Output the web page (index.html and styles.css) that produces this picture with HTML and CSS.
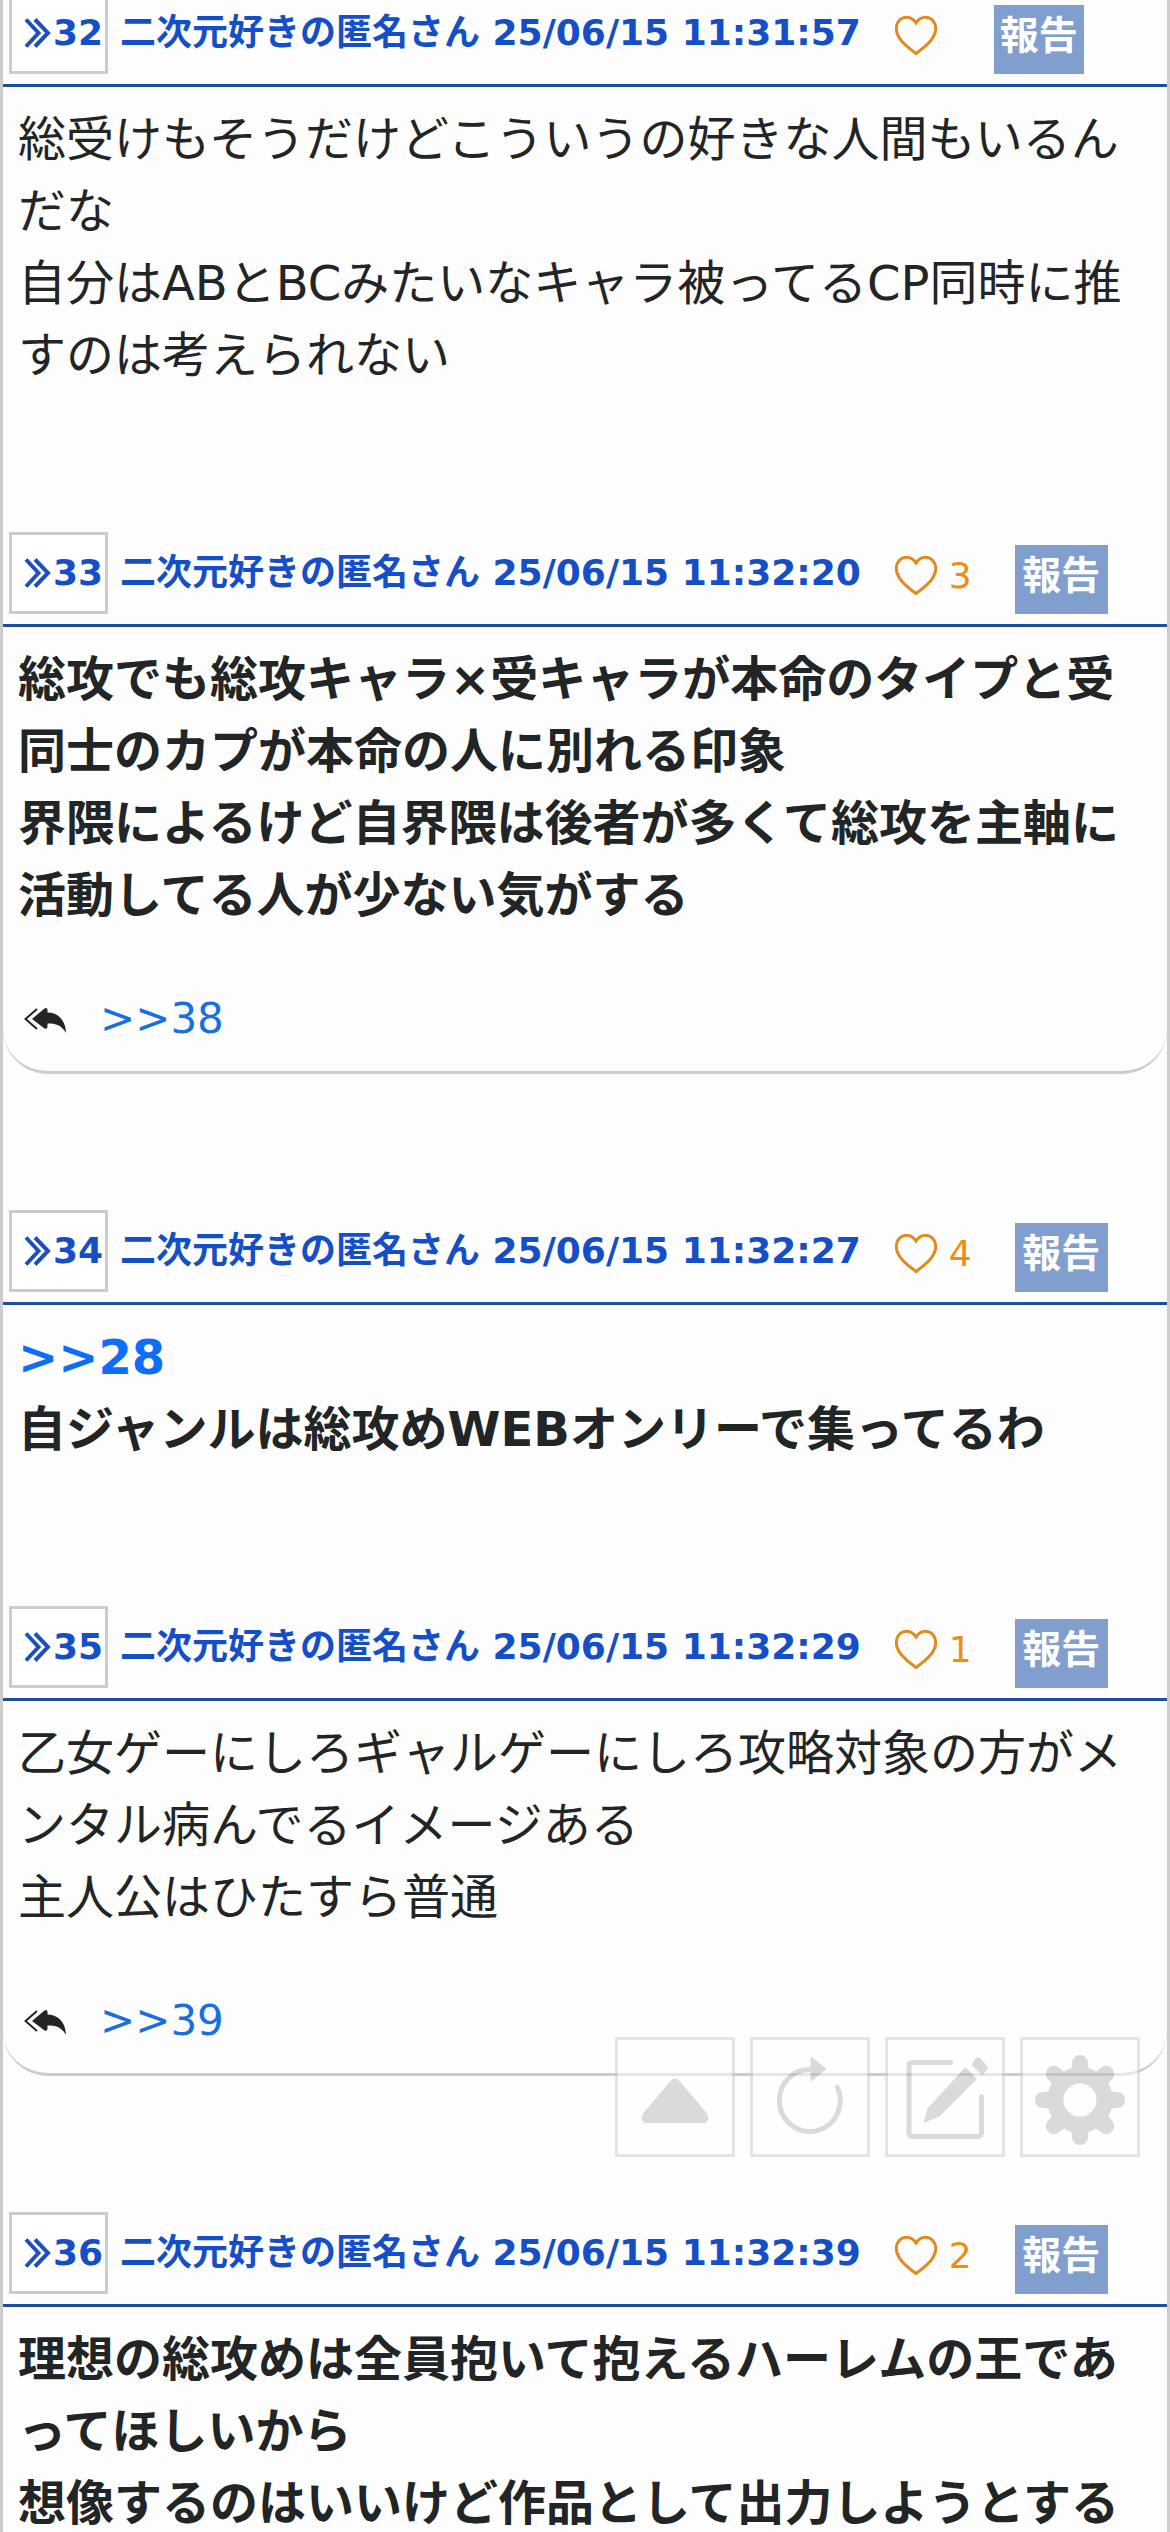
FILE: index.html
```html
<!DOCTYPE html>
<html lang="ja">
<head>
<meta charset="utf-8">
<meta name="viewport" content="width=device-width, initial-scale=1">
<title>二次元好きの匿名さん</title>
<link rel="stylesheet" href="styles.css">
</head>
<body>
<svg class="sprite" aria-hidden="true">
  <symbol id="chevrons" viewBox="0 0 27 30"><path d="M2 1.500 14.500 15 2 28.500M11 1.500 24 15 11 28.500"/></symbol>
  <symbol id="heart" viewBox="0 0 42 39"><path d="M21 7C18.500 3.200 15 1.300 11.500 1.300C5.500 1.300 1.300 6 1.300 12.500C1.300 22 10 29.500 21 37.500C32 29.500 40.700 22 40.700 12.500C40.700 6 36.500 1.300 30.500 1.300C27 1.300 23.500 3.200 21 7Z"/></symbol>
  <symbol id="replies" viewBox="0 0 42 27"><path class="replies-line" d="M13 2 1.500 12 13 22"/><path d="M8 12 20.500 1.500Q23.500 0 23.500 3V5.500C33 5.500 41.500 12 42 26C37.500 18 32 16.500 23.500 16.500V19.500Q23.500 22.500 20.500 21.500Z"/></symbol>
</svg>
<main class="thread">
  <article class="post">
    <header class="post-head">
      <a class="number" href="#p32"><svg class="chevrons"><use href="#chevrons"/></svg>32</a>
      <a class="byline" href="#p32">二次元好きの匿名さん 25/06/15 11:31:57</a>
      <button class="vote vote-empty" type="button" aria-label="いいね"><svg class="heart"><use href="#heart"/></svg></button>
      <button class="report" type="button">報告</button>
    </header>
    <p class="text">総受けもそうだけどこういうの好きな人間もいるんだな<br>自分はABとBCみたいなキャラ被ってるCP同時に推すのは考えられない</p>
  </article>
  <article class="post has-replies">
    <header class="post-head">
      <a class="number" href="#p33"><svg class="chevrons"><use href="#chevrons"/></svg>33</a>
      <a class="byline" href="#p33">二次元好きの匿名さん 25/06/15 11:32:20</a>
      <button class="vote" type="button" aria-label="いいね 3"><svg class="heart"><use href="#heart"/></svg>3</button>
      <button class="report" type="button">報告</button>
    </header>
    <p class="text popular">総攻でも総攻キャラ×受キャラが本命のタイプと受同士のカプが本命の人に別れる印象<br>界隈によるけど自界隈は後者が多くて総攻を主軸に活動してる人が少ない気がする</p>
    <footer class="replies"><svg class="replies-icon"><use href="#replies"/></svg><a class="reply-link" href="#p38">&gt;&gt;38</a></footer>
  </article>
  <article class="post">
    <header class="post-head">
      <a class="number" href="#p34"><svg class="chevrons"><use href="#chevrons"/></svg>34</a>
      <a class="byline" href="#p34">二次元好きの匿名さん 25/06/15 11:32:27</a>
      <button class="vote" type="button" aria-label="いいね 4"><svg class="heart"><use href="#heart"/></svg>4</button>
      <button class="report" type="button">報告</button>
    </header>
    <p class="text popular"><a class="reply-link" href="#p28">&gt;&gt;28</a><br>自ジャンルは総攻めWEBオンリーで集ってるわ</p>
  </article>
  <article class="post has-replies">
    <header class="post-head">
      <a class="number" href="#p35"><svg class="chevrons"><use href="#chevrons"/></svg>35</a>
      <a class="byline" href="#p35">二次元好きの匿名さん 25/06/15 11:32:29</a>
      <button class="vote" type="button" aria-label="いいね 1"><svg class="heart"><use href="#heart"/></svg>1</button>
      <button class="report" type="button">報告</button>
    </header>
    <p class="text">乙女ゲーにしろギャルゲーにしろ攻略対象の方がメンタル病んでるイメージある<br>主人公はひたすら普通</p>
    <footer class="replies"><svg class="replies-icon"><use href="#replies"/></svg><a class="reply-link" href="#p39">&gt;&gt;39</a></footer>
  </article>
  <article class="post">
    <header class="post-head">
      <a class="number" href="#p36"><svg class="chevrons"><use href="#chevrons"/></svg>36</a>
      <a class="byline" href="#p36">二次元好きの匿名さん 25/06/15 11:32:39</a>
      <button class="vote" type="button" aria-label="いいね 2"><svg class="heart"><use href="#heart"/></svg>2</button>
      <button class="report" type="button">報告</button>
    </header>
    <p class="text popular">理想の総攻めは全員抱いて抱えるハーレムの王であってほしいから<br>想像するのはいいけど作品として出力しようとする</p>
  </article>
</main>
<nav class="tools" aria-label="ツール">
  <button class="tool" type="button" aria-label="上へ"><svg viewBox="0 0 120 120"><path d="M56 45Q60 40 64 45L91 77Q94 82 90 85H30Q26 82 29 77Z" stroke-width="2" stroke-linejoin="round" stroke="currentColor"/></svg></button>
  <button class="tool" type="button" aria-label="更新"><svg viewBox="0 0 120 120"><path class="stroke" d="M61 32.500A30.500 31 0 1 0 87.500 50.500"/><path d="M61 20 76 32 61 44Z" stroke="currentColor" stroke-linejoin="round"/></svg></button>
  <button class="tool" type="button" aria-label="書き込む"><svg viewBox="0 0 120 120"><path class="stroke" d="M65.500 25.500H27.500Q24 25.500 24 29V95.500Q24 99.500 27.500 99.500H92.500Q96.500 99.500 96.500 95.500V59.500"/><path d="M38.500 86 42.500 71.500 79 31.500Q80.500 30 82 31.500L91.700 42.300 54.500 79.500ZM86.500 28 90.500 21.500Q93 19 95.500 21.500L101.500 28Q104 30.500 101.500 33.500L97 38Z"/></svg></button>
  <button class="tool" type="button" aria-label="設定"><svg viewBox="0 0 120 120"><defs><path id="tooth" d="M47 32.500C51 33 52 31 52 26A8 8 0 0 1 68 26C68 31 69 33 73 32.500L68 46H52Z"/></defs><circle cx="60" cy="63" r="24.500" fill="none" stroke="currentColor" stroke-width="16"/><use href="#tooth"/><use href="#tooth" transform="rotate(45 60 63)"/><use href="#tooth" transform="rotate(90 60 63)"/><use href="#tooth" transform="rotate(135 60 63)"/><use href="#tooth" transform="rotate(180 60 63)"/><use href="#tooth" transform="rotate(225 60 63)"/><use href="#tooth" transform="rotate(270 60 63)"/><use href="#tooth" transform="rotate(315 60 63)"/></svg></button>
</nav>
</body>
</html>
```
FILE: styles.css
```css
* { box-sizing: border-box; }

body {
  margin: 0;
  height: 100vh;
  overflow: hidden;
  background: #fdfdfd;
  color: #222526;
  font-family: "DejaVu Sans", "Noto Sans CJK JP", sans-serif;
}

a { text-decoration: none; }

button {
  margin: 0;
  padding: 0;
  border: 0;
  background: none;
  font-family: inherit;
  cursor: pointer;
}

.sprite {
  position: absolute;
  width: 0;
  height: 0;
}

.thread {
  display: flex;
  flex-direction: column;
  min-height: 100vh;
  margin-top: -8px;
  border: solid #ccc;
  border-width: 0 3px;
}

.post { padding-bottom: 141px; }

.post-head {
  display: flex;
  align-items: center;
  padding: 0 0 10px 6px;
  border-bottom: 3px solid #1b4da3;
}

.number {
  display: flex;
  align-items: center;
  flex: none;
  width: 99px;
  height: 82px;
  padding-left: 12px;
  border: 3px solid #ccc;
  background: #fff;
  color: #144fc8;
  font-size: 36px;
  font-weight: 700;
  line-height: 54px;
}

.chevrons {
  flex: none;
  width: 27px;
  height: 30px;
  margin-right: 2px;
  fill: none;
  stroke: #1d50bd;
  stroke-width: 4;
}

.byline {
  margin: 0 34px 0 12px;
  color: #144fc8;
  font-size: 36px;
  font-weight: 700;
  line-height: 54px;
  white-space: nowrap;
}

.vote {
  display: flex;
  align-items: center;
  gap: 12px;
  margin-right: 43px;
  padding-top: 5px;
  color: #ed8e13;
  font-size: 36px;
  line-height: 54px;
}

.vote-empty { margin-right: 57px; }

.heart {
  width: 42px;
  height: 39px;
  fill: none;
  stroke: #e08a20;
  stroke-width: 3;
}

.report {
  align-self: flex-end;
  width: 93px;
  height: 69px;
  padding-bottom: 8px;
  background: #809fcf;
  color: #fff;
  font-size: 39px;
  font-weight: 700;
  line-height: 60px;
}

.vote-empty + .report { width: 90px; }

.text {
  margin: 0;
  padding: 16px 18px 0 15px;
  font-size: 48px;
  line-height: 72px;
}

.popular { font-weight: 700; }

.reply-link { color: #0d6efd; }

.has-replies {
  margin-bottom: 136px;
  padding-bottom: 21px;
  border-bottom: 3px solid #ccc;
  border-radius: 0 0 45px 45px;
}

.replies {
  display: flex;
  align-items: center;
  gap: 34px;
  padding: 56px 0 0 21px;
  font-size: 42px;
  line-height: 63px;
}

.replies .reply-link { color: #1a6fe0; }

.replies-icon {
  width: 42px;
  height: 27px;
  margin-top: 4px;
  fill: #222526;
}

.replies-line {
  fill: none;
  stroke: #222526;
  stroke-width: 2;
}

.tools {
  position: fixed;
  right: 30px;
  bottom: 375px;
  display: flex;
  gap: 15px;
}

.tool {
  width: 120px;
  height: 120px;
  border: 3px solid #ccc;
  background: #fff;
  color: #b8b8b8;
  opacity: 0.5;
}

.tool svg {
  display: block;
  width: 120px;
  height: 120px;
  margin: -3px;
  fill: currentColor;
}

.stroke {
  fill: none;
  stroke: currentColor;
  stroke-width: 5;
  stroke-linecap: round;
}
```
